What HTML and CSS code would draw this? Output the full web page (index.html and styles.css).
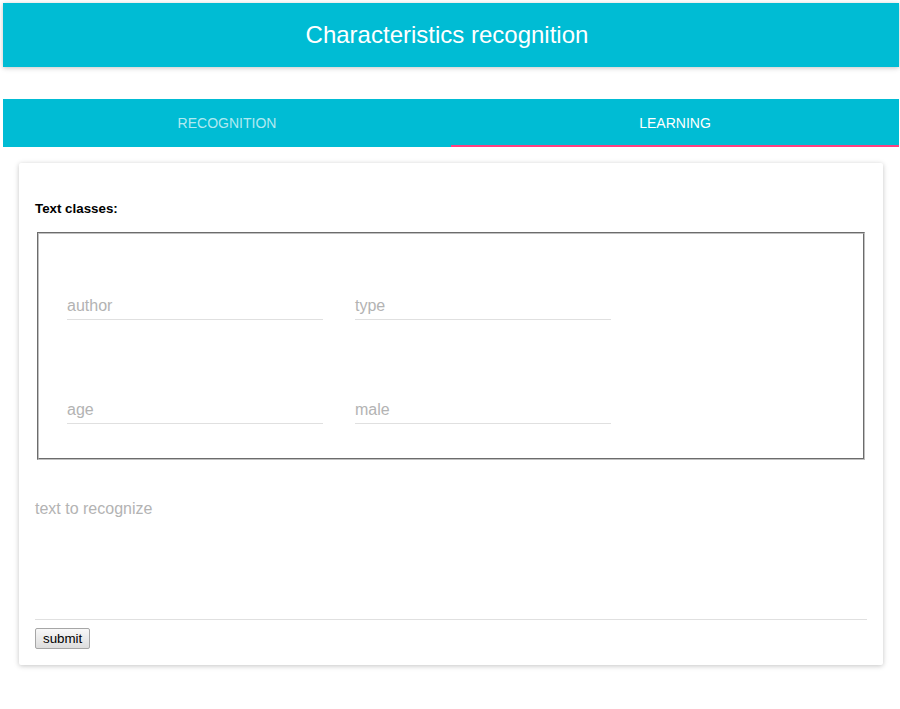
FILE: index.html
```html
<!DOCTYPE html>
<html lang="en">
<head>
<meta charset="utf-8">
<title>Characteristics recognition</title>
<link rel="stylesheet" href="styles.css">
</head>
<body>
<div class="page">
  <header class="appbar">
    <h1 class="appbar-title">Characteristics recognition</h1>
  </header>

  <nav class="tabs">
    <div class="tab-row">
      <div class="tab">RECOGNITION</div>
      <div class="tab tab-active">LEARNING</div>
    </div>
    <div class="ink-track"><div class="ink-bar"></div></div>
  </nav>

  <main class="card">
    <div class="section-label">Text classes:</div>
    <fieldset class="classes">
      <div class="field"><span class="hint">author</span></div>
      <div class="field"><span class="hint">type</span></div>
      <div class="field"><span class="hint">age</span></div>
      <div class="field"><span class="hint">male</span></div>
    </fieldset>
    <div class="textarea-field"><span class="hint">text to recognize</span></div>
    <button class="submit" type="button">submit</button>
  </main>
</div>
</body>
</html>
```

FILE: styles.css
```css
html, body {
  margin: 0;
  padding: 0;
  background: #ffffff;
}

body {
  font-family: "Liberation Sans", Arial, sans-serif;
}

.page {
  padding: 3px 1px 40px 3px;
}

.appbar {
  height: 64px;
  padding-right: 8px;
  background: #00bcd4;
  box-shadow: rgba(0, 0, 0, 0.12) 0 1px 6px, rgba(0, 0, 0, 0.12) 0 1px 4px;
  display: flex;
  align-items: center;
  justify-content: center;
}

.appbar-title {
  margin: 0;
  font-size: 24px;
  font-weight: 400;
  line-height: 64px;
  color: #ffffff;
}

.tabs {
  margin-top: 32px;
  background: #00bcd4;
}

.tab-row {
  display: flex;
  height: 48px;
}

.tab {
  flex: 1 1 0;
  display: flex;
  align-items: center;
  justify-content: center;
  font-size: 14px;
  color: rgba(255, 255, 255, 0.7);
}

.tab-active {
  color: #ffffff;
}

.ink-track {
  height: 2px;
  margin-top: -2px;
  display: flex;
  justify-content: flex-end;
}

.ink-bar {
  width: 50%;
  height: 2px;
  background: #ff4081;
}

.card {
  display: block;
  margin: 16px 16px 0 16px;
  padding: 16px;
  background: #ffffff;
  border-radius: 2px;
  box-shadow: rgba(0, 0, 0, 0.12) 0 1px 6px, rgba(0, 0, 0, 0.12) 0 1px 4px;
}

.section-label {
  margin: 22px 0 15px 0;
  font-size: 13.33px;
  font-weight: 700;
  line-height: 16px;
  color: #000000;
}

.classes {
  margin: 0 2px;
  padding: 22px 28px 26px 28px;
  border: 2px groove #c0c0c0;
  display: grid;
  grid-template-columns: 256px 256px;
  column-gap: 32px;
  row-gap: 32px;
}

.field {
  position: relative;
  height: 72px;
  width: 256px;
}

.field::after {
  content: "";
  position: absolute;
  left: 0;
  right: 0;
  bottom: 8px;
  height: 1px;
  background: #e0e0e0;
}

.hint {
  font-size: 16px;
  line-height: 24px;
  color: #b3b3b3;
}

.field .hint {
  position: absolute;
  left: 0;
  bottom: 10px;
}

.textarea-field {
  margin-top: 24px;
  padding-top: 13px;
  height: 122px;
  border-bottom: 1px solid #e0e0e0;
}

.textarea-field .hint {
  display: block;
}

.submit {
  display: block;
  margin-top: 8px;
  padding: 2px 7px;
  font-family: "Liberation Sans", Arial, sans-serif;
  font-size: 13.33px;
  line-height: 15px;
  color: #000000;
  background: linear-gradient(#f8f8f8, #dddddd);
  border: 1px solid #a6a6a6;
  border-radius: 2px;
}
```
